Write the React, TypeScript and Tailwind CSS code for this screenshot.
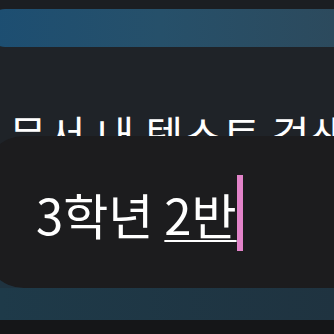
export default function App() {
  const font = { fontFamily: '"Noto Sans CJK KR", "Noto Sans", sans-serif' };
  return (
    <div className="w-[334px] h-[334px] overflow-hidden bg-[#1b1e22] flex flex-col" style={font}>
      <div className="h-[9px] shrink-0" />
      <div className="h-[38px] shrink-0 -ml-[14px] rounded-l-[26px] bg-gradient-to-r from-[#1c4e72] via-[#26506a] to-[#2c4a5d]" />
      <div className="h-[89px] shrink-0 overflow-hidden bg-[#1f2328] pl-[9px] pt-[66px]">
        <p className="text-[41px] leading-none text-white whitespace-nowrap tracking-[1px]">문서 내 텍스트 검색</p>
      </div>
      <div className="shrink-0 bg-[linear-gradient(to_bottom,#1f2328_50%,#1f3340_50%)]">
        <div className="h-[152px] -ml-[16px] rounded-l-[40px] bg-[#1c1c1e] flex items-center pl-[52px]">
          <div className="flex items-center pt-[2px]">
            <span className="text-[49px] leading-none text-white whitespace-nowrap">
              3학년 <span className="underline decoration-2 underline-offset-[5px]">2반</span>
            </span>
            <span className="w-[6px] h-[76px] bg-[#e283c9]" />
          </div>
        </div>
      </div>
      <div className="h-[32px] shrink-0 bg-gradient-to-r from-[#1e3a49] to-[#1f3340]" />
      <div className="flex-1 bg-[#151618]" />
    </div>
  );
}
